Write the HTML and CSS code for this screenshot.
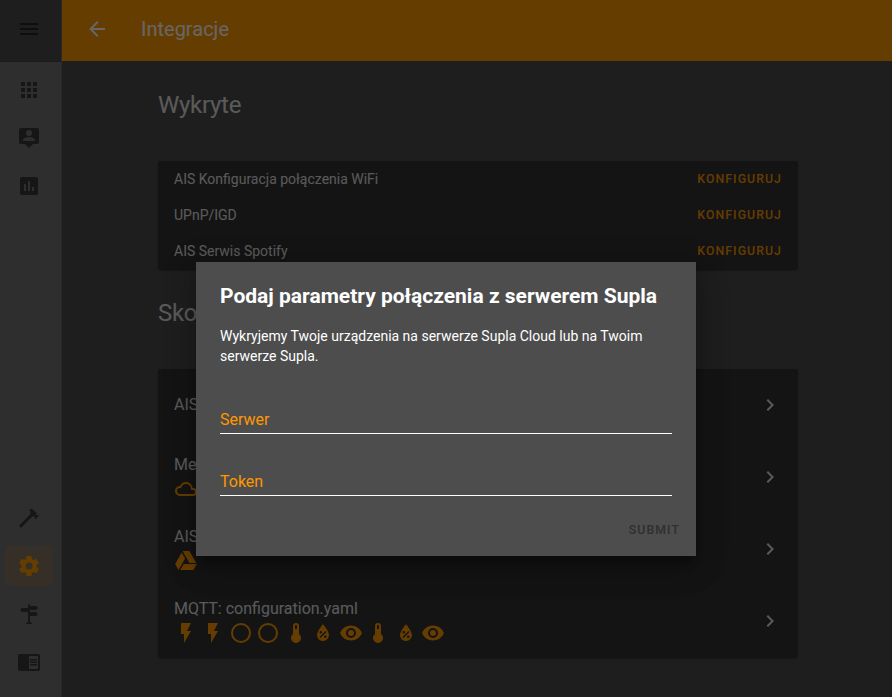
FILE: index.html
```
<!DOCTYPE html>
<html lang="pl">
<head>
<meta charset="utf-8">
<title>Integracje</title>
<link rel="stylesheet" href="styles.css">
</head>
<body>
<svg class="defs" width="0" height="0" aria-hidden="true">
  <symbol id="chevron" viewBox="0 0 24 24"><path d="M8.59,16.58L13.17,12L8.59,7.41L10,6L16,12L10,18L8.59,16.58Z"/></symbol>
  <symbol id="flash" viewBox="0 0 24 24"><path d="M7,2V13H10V22L17,10H13L17,2H7Z"/></symbol>
  <symbol id="circle" viewBox="0 0 24 24"><path d="M12,20A8,8 0 0,1 4,12A8,8 0 0,1 12,4A8,8 0 0,1 20,12A8,8 0 0,1 12,20M12,2A10,10 0 0,0 2,12A10,10 0 0,0 12,22A10,10 0 0,0 22,12A10,10 0 0,0 12,2Z"/></symbol>
  <symbol id="thermo" viewBox="0 0 24 24"><path d="M15,13V5A3,3 0 0,0 9,5V13A5,5 0 1,0 15,13M12,4A1,1 0 0,1 13,5V8H11V5A1,1 0 0,1 12,4Z"/></symbol>
  <symbol id="humidity" viewBox="0 0 24 24"><path fill-rule="evenodd" d="M12,3.25C12,3.25 6,10 6,14C6,17.32 8.69,20 12,20A6,6 0 0,0 18,14C18,10 12,3.25 12,3.25M14.47,9.97L15.53,11.03L9.53,17.03L8.47,15.97M9.75,10A1.25,1.25 0 0,1 11,11.25A1.25,1.25 0 0,1 9.75,12.5A1.25,1.25 0 0,1 8.5,11.25A1.25,1.25 0 0,1 9.75,10M14.25,14.5A1.25,1.25 0 0,1 15.5,15.75A1.25,1.25 0 0,1 14.25,17A1.25,1.25 0 0,1 13,15.75A1.25,1.25 0 0,1 14.25,14.5Z"/></symbol>
  <symbol id="eye" viewBox="0 0 24 24"><path d="M12,9A3,3 0 0,0 9,12A3,3 0 0,0 12,15A3,3 0 0,0 15,12A3,3 0 0,0 12,9M12,17A5,5 0 0,1 7,12A5,5 0 0,1 12,7A5,5 0 0,1 17,12A5,5 0 0,1 12,17M12,4.5C7,4.5 2.73,7.61 1,12C2.73,16.39 7,19.5 12,19.5C17,19.5 21.27,16.39 23,12C21.27,7.61 17,4.5 12,4.5Z"/></symbol>
</svg>
<div class="app">
  <nav class="sidebar">
    <div class="menu"><svg class="icon" viewBox="0 0 24 24"><path d="M3,6H21V8H3V6M3,11H21V13H3V11M3,16H21V18H3V16Z"/></svg></div>
    <div class="nav-list">
      <a class="nav-item"><svg class="icon" viewBox="0 0 24 24"><path d="M16,20H20V16H16M16,14H20V10H16M10,8H14V4H10M16,8H20V4H16M10,14H14V10H10M4,14H8V10H4M4,20H8V16H4M10,20H14V16H10M4,8H8V4H4V8Z"/></svg></a>
      <a class="nav-item"><svg class="icon" viewBox="0 0 24 24"><path fill-rule="evenodd" d="M20,2A2,2 0 0,1 22,4V16A2,2 0 0,1 20,18H16L12,22L8,18H4A2,2 0 0,1 2,16V4A2,2 0 0,1 4,2H20M12,4A3,3 0 0,0 9,7A3,3 0 0,0 12,10A3,3 0 0,0 15,7A3,3 0 0,0 12,4M18,15V14C18,12 14,10.9 12,10.9C10,10.9 6,12 6,14V15H18Z"/></svg></a>
      <a class="nav-item"><svg class="icon" viewBox="0 0 24 24"><path d="M17,17H15V13H17M13,17H11V7H13M9,17H7V10H9M19,3H5C3.89,3 3,3.89 3,5V19A2,2 0 0,0 5,21H19A2,2 0 0,0 21,19V5C21,3.89 20.1,3 19,3Z"/></svg></a>
      <div class="spacer"></div>
      <a class="nav-item"><svg class="icon" viewBox="0 0 24 24"><path d="M2,19.63L13.43,8.2L12.72,7.5L14.14,6.07L12,3.89C13.2,2.7 15.09,2.7 16.27,3.89L19.87,7.5L18.45,8.91H21.29L22,9.62L18.45,13.21L17.74,12.5V9.62L16.27,11.04L15.56,10.33L4.13,21.76L2,19.63Z"/></svg></a>
      <a class="nav-item active"><svg class="icon" viewBox="0 0 24 24"><path d="M12,15.5A3.5,3.5 0 0,1 8.5,12A3.5,3.5 0 0,1 12,8.5A3.5,3.5 0 0,1 15.5,12A3.5,3.5 0 0,1 12,15.5M19.43,12.97C19.47,12.65 19.5,12.33 19.5,12C19.5,11.67 19.47,11.34 19.43,11L21.54,9.37C21.73,9.22 21.78,8.95 21.66,8.73L19.66,5.27C19.54,5.05 19.27,4.96 19.05,5.05L16.56,6.05C16.04,5.66 15.5,5.32 14.87,5.07L14.5,2.42C14.46,2.18 14.25,2 14,2H10C9.75,2 9.54,2.18 9.5,2.42L9.13,5.07C8.5,5.32 7.96,5.66 7.44,6.05L4.95,5.05C4.73,4.96 4.46,5.05 4.34,5.27L2.34,8.73C2.21,8.95 2.27,9.22 2.46,9.37L4.57,11C4.53,11.34 4.5,11.67 4.5,12C4.5,12.33 4.53,12.65 4.57,12.97L2.46,14.63C2.27,14.78 2.21,15.05 2.34,15.27L4.34,18.73C4.46,18.95 4.73,19.03 4.95,18.95L7.44,17.94C7.96,18.34 8.5,18.68 9.13,18.93L9.5,21.58C9.54,21.82 9.75,22 10,22H14C14.25,22 14.46,21.82 14.5,21.58L14.87,18.93C15.5,18.67 16.04,18.34 16.56,17.94L19.05,18.95C19.27,19.03 19.54,18.95 19.66,18.73L21.66,15.27C21.78,15.05 21.73,14.78 21.54,14.63L19.43,12.97Z"/></svg></a>
      <a class="nav-item"><svg class="icon" viewBox="0 0 24 24"><path d="M11,10H5L3,8L5,6H11V3L12,2L13,3V4H19L21,6L19,8H13V10H19L21,12L19,14H13V20A2,2 0 0,1 15,22H9A2,2 0 0,1 11,20V10Z"/></svg></a>
      <a class="nav-item"><svg class="icon" viewBox="0 0 24 24"><path fill-rule="evenodd" d="M3,4H21A2,2 0 0,1 23,6V19A2,2 0 0,1 21,21H3A2,2 0 0,1 1,19V6A2,2 0 0,1 3,4M12,6V19H21V6H12M13,9H20V10.5H13V9M13,11.5H20V13H13V11.5M13,14H20V15.5H13V14Z"/></svg></a>
    </div>
  </nav>
  <div class="main">
    <header class="toolbar">
      <svg class="icon" viewBox="0 0 24 24"><path d="M20,11V13H8L13.5,18.5L12.08,19.92L4.16,12L12.08,4.08L13.5,5.5L8,11H20Z"/></svg>
      <span class="title">Integracje</span>
    </header>
    <main class="content">
      <h2 class="heading">Wykryte</h2>
      <section class="card">
        <div class="found"><span>AIS Konfiguracja połączenia WiFi</span><span class="action">KONFIGURUJ</span></div>
        <div class="found"><span>UPnP/IGD</span><span class="action">KONFIGURUJ</span></div>
        <div class="found"><span>AIS Serwis Spotify</span><span class="action">KONFIGURUJ</span></div>
      </section>
      <h2 class="heading">Sko</h2>
      <section class="card">
        <div class="entry"><div>AIS</div><svg class="icon"><use href="#chevron"/></svg></div>
        <div class="entry"><div>Me<div class="icons"><svg class="icon" viewBox="0 0 24 24"><path d="M6,19A5,5 0 0,1 1,14A5,5 0 0,1 6,9C7,6.65 9.3,5 12,5C15.43,5 18.24,7.66 18.5,11.03L19,11A4,4 0 0,1 23,15A4,4 0 0,1 19,19H6M19,13H17V12A5,5 0 0,0 12,7C9.5,7 7.45,8.82 7.06,11.19C6.73,11.07 6.37,11 6,11A3,3 0 0,0 3,14A3,3 0 0,0 6,17H19A2,2 0 0,0 21,15A2,2 0 0,0 19,13Z"/></svg></div></div><svg class="icon"><use href="#chevron"/></svg></div>
        <div class="entry"><div>AIS<div class="icons"><svg class="icon" viewBox="0 0 24 24"><path d="M7.71,3.5L1.15,15L4.58,21L11.13,9.5M9.73,15L6.3,21H19.42L22.85,15M22.28,14L15.42,2H8.58L8.57,2L15.43,14H22.28Z"/></svg></div></div><svg class="icon"><use href="#chevron"/></svg></div>
        <div class="entry">
          <div>MQTT: configuration.yaml
            <div class="icons">
              <svg class="icon"><use href="#flash"/></svg><svg class="icon"><use href="#flash"/></svg><svg class="icon"><use href="#circle"/></svg><svg class="icon"><use href="#circle"/></svg><svg class="icon"><use href="#thermo"/></svg><svg class="icon"><use href="#humidity"/></svg><svg class="icon"><use href="#eye"/></svg><svg class="icon"><use href="#thermo"/></svg><svg class="icon"><use href="#humidity"/></svg><svg class="icon"><use href="#eye"/></svg>
            </div>
          </div>
          <svg class="icon"><use href="#chevron"/></svg>
        </div>
      </section>
    </main>
  </div>
</div>
<div class="scrim">
  <div class="dialog" role="dialog">
    <h1 class="dialog-title">Podaj parametry połączenia z serwerem Supla</h1>
    <p class="dialog-text">Wykryjemy Twoje urządzenia na serwerze Supla Cloud lub na Twoim serwerze Supla.</p>
    <div class="field">Serwer</div>
    <div class="field">Token</div>
    <div class="submit">SUBMIT</div>
  </div>
</div>
</body>
</html>
```

FILE: styles.css
```
* { box-sizing: border-box; }
body { margin: 0; height: 697px; overflow: hidden; background: #4d4d4d; color: #fff; font: 14px/20px Roboto, sans-serif; }
.defs { display: none; }
.icon { display: block; width: 24px; height: 24px; flex: none; fill: currentColor; }
.app { display: flex; height: 697px; }
.sidebar { width: 62px; display: flex; flex-direction: column; background: #737373; border-right: 1px solid #666; color: #373737; }
.menu { height: 62px; padding: 17px 0 0 17px; background: #4d4d4d; border-bottom: 1px solid #434343; color: #252525; }
.nav-list { flex: 1; display: flex; flex-direction: column; gap: 8px; padding: 8px 8px 15px 5px; }
.nav-item { height: 40px; display: flex; align-items: center; padding-left: 12px; border-radius: 4px; }
.active { color: #ff9800; background: rgba(255, 152, 0, .12); }
.spacer { flex: 1; }
.main { flex: 1; }
.toolbar { height: 61px; display: flex; align-items: center; gap: 32px; padding: 0 0 3px 23px; background: #ff9800; font-size: 20px; }
.content { width: 640px; margin-left: 96px; }
.heading { margin: 0; height: 100px; padding-top: 28px; font-size: 24px; font-weight: 400; line-height: 32px; letter-spacing: -.012em; color: #e1e1e1; }
.card { background: #323232; border-radius: 2px; box-shadow: 0 2px 2px rgba(0,0,0,.14), 0 1px 5px rgba(0,0,0,.12), 0 3px 1px -2px rgba(0,0,0,.2); color: #e1e1e1; }
.found { height: 36px; padding: 0 16px; display: flex; align-items: center; justify-content: space-between; }
.action { color: #ff9800; font-size: 12.25px; font-weight: 500; letter-spacing: 1.09px; }
.entry { height: 72px; padding: 0 16px; display: flex; align-items: center; justify-content: space-between; font-size: 16px; line-height: 24px; }
.icons { display: flex; gap: 3.47px; color: #ff9800; }
.scrim { position: absolute; inset: 0; display: flex; align-items: center; justify-content: center; padding-top: 121px; background: rgba(0,0,0,.6); }
.dialog { width: 500px; height: 294px; padding: 20px 24px 0; background: #4d4d4d; box-shadow: 0 16px 24px 2px rgba(0,0,0,.14), 0 6px 30px 5px rgba(0,0,0,.12), 0 8px 10px -5px rgba(0,0,0,.4); }
.dialog-title { margin: 0 0 16px; font-size: 21px; font-weight: 700; line-height: 28px; white-space: nowrap; }
.dialog-text { margin: 0 0 36px; }
.field { height: 32px; margin-bottom: 30px; border-bottom: 1px solid #fff; color: #ff9800; font-size: 16px; line-height: 36px; }
.submit { margin: -6px -8px 0 0; text-align: right; color: #2f2f2f; font-size: 12.25px; font-weight: 500; letter-spacing: 1.09px; }
```
